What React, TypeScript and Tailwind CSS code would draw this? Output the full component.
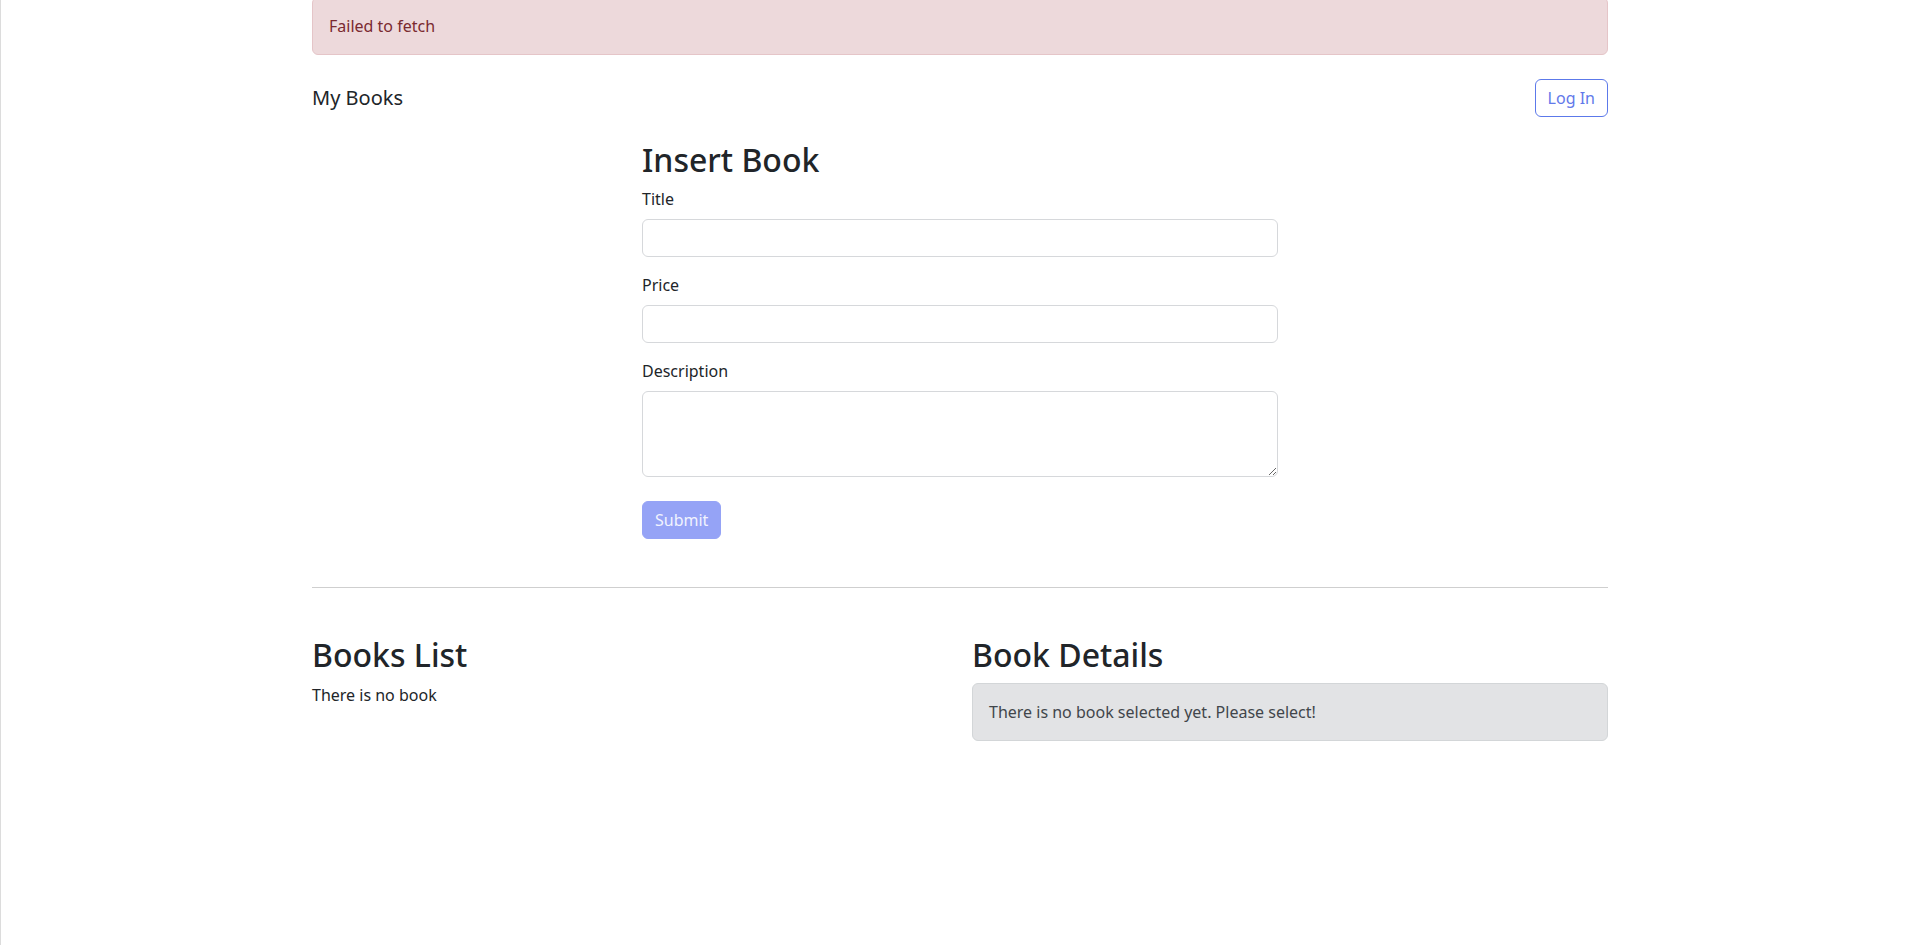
import React from "react";

const App = () => {
  return (
    <div
      className="min-h-[948px] border-l border-[#dcdcdc] bg-white text-[16px] leading-6 text-[#212529]"
      style={{ fontFamily: '"Noto Sans", "Open Sans", sans-serif' }}
    >
      <div className="ml-[311px] w-[1296px]">
        {/* Error alert */}
        <div className="-mt-[3px] mb-4 rounded-md border border-[#e5c5c8] bg-[#edd9db] p-4 text-[#7a2a30]">
          Failed to fetch
        </div>

        {/* Navbar */}
        <nav className="flex items-center justify-between py-2">
          <span className="text-xl">My Books</span>
          <button className="h-[38px] rounded-md border border-[#5c79ea] px-3 text-[#6279ea]">
            Log In
          </button>
        </nav>

        {/* Insert form */}
        <div className="ml-[330px] mt-4 w-[636px]">
          <h2 className="mb-2 text-[32px] leading-[1.2] font-medium">Insert Book</h2>
          <div className="mb-4">
            <label className="mb-2 block">Title</label>
            <input className="block h-[38px] w-full rounded-md border border-[#d6d8db]" />
          </div>
          <div className="mb-4">
            <label className="mb-2 block">Price</label>
            <input className="block h-[38px] w-full rounded-md border border-[#d6d8db]" />
          </div>
          <div className="mb-6">
            <label className="mb-2 block">Description</label>
            <textarea className="block h-[86px] w-full rounded-md border border-[#d6d8db]" />
          </div>
          <button
            disabled
            className="h-[38px] rounded-md border border-[#95a3f6] bg-[#95a3f6] px-3 text-[#f1f3fe]"
          >
            Submit
          </button>
        </div>

        <hr className="mt-12 border-t border-[#cfcfcf]" />

        {/* Lists */}
        <div className="mt-[48px] grid grid-cols-2 gap-6">
          <div>
            <h2 className="mb-2 text-[32px] leading-[1.2] font-medium">Books List</h2>
            <p>There is no book</p>
          </div>
          <div>
            <h2 className="mb-2 text-[32px] leading-[1.2] font-medium">Book Details</h2>
            <div className="rounded-md border border-[#d3d6d8] bg-[#e2e3e5] p-4 text-[#41464b]">
              There is no book selected yet. Please select!
            </div>
          </div>
        </div>
      </div>
    </div>
  );
};

export default App;
